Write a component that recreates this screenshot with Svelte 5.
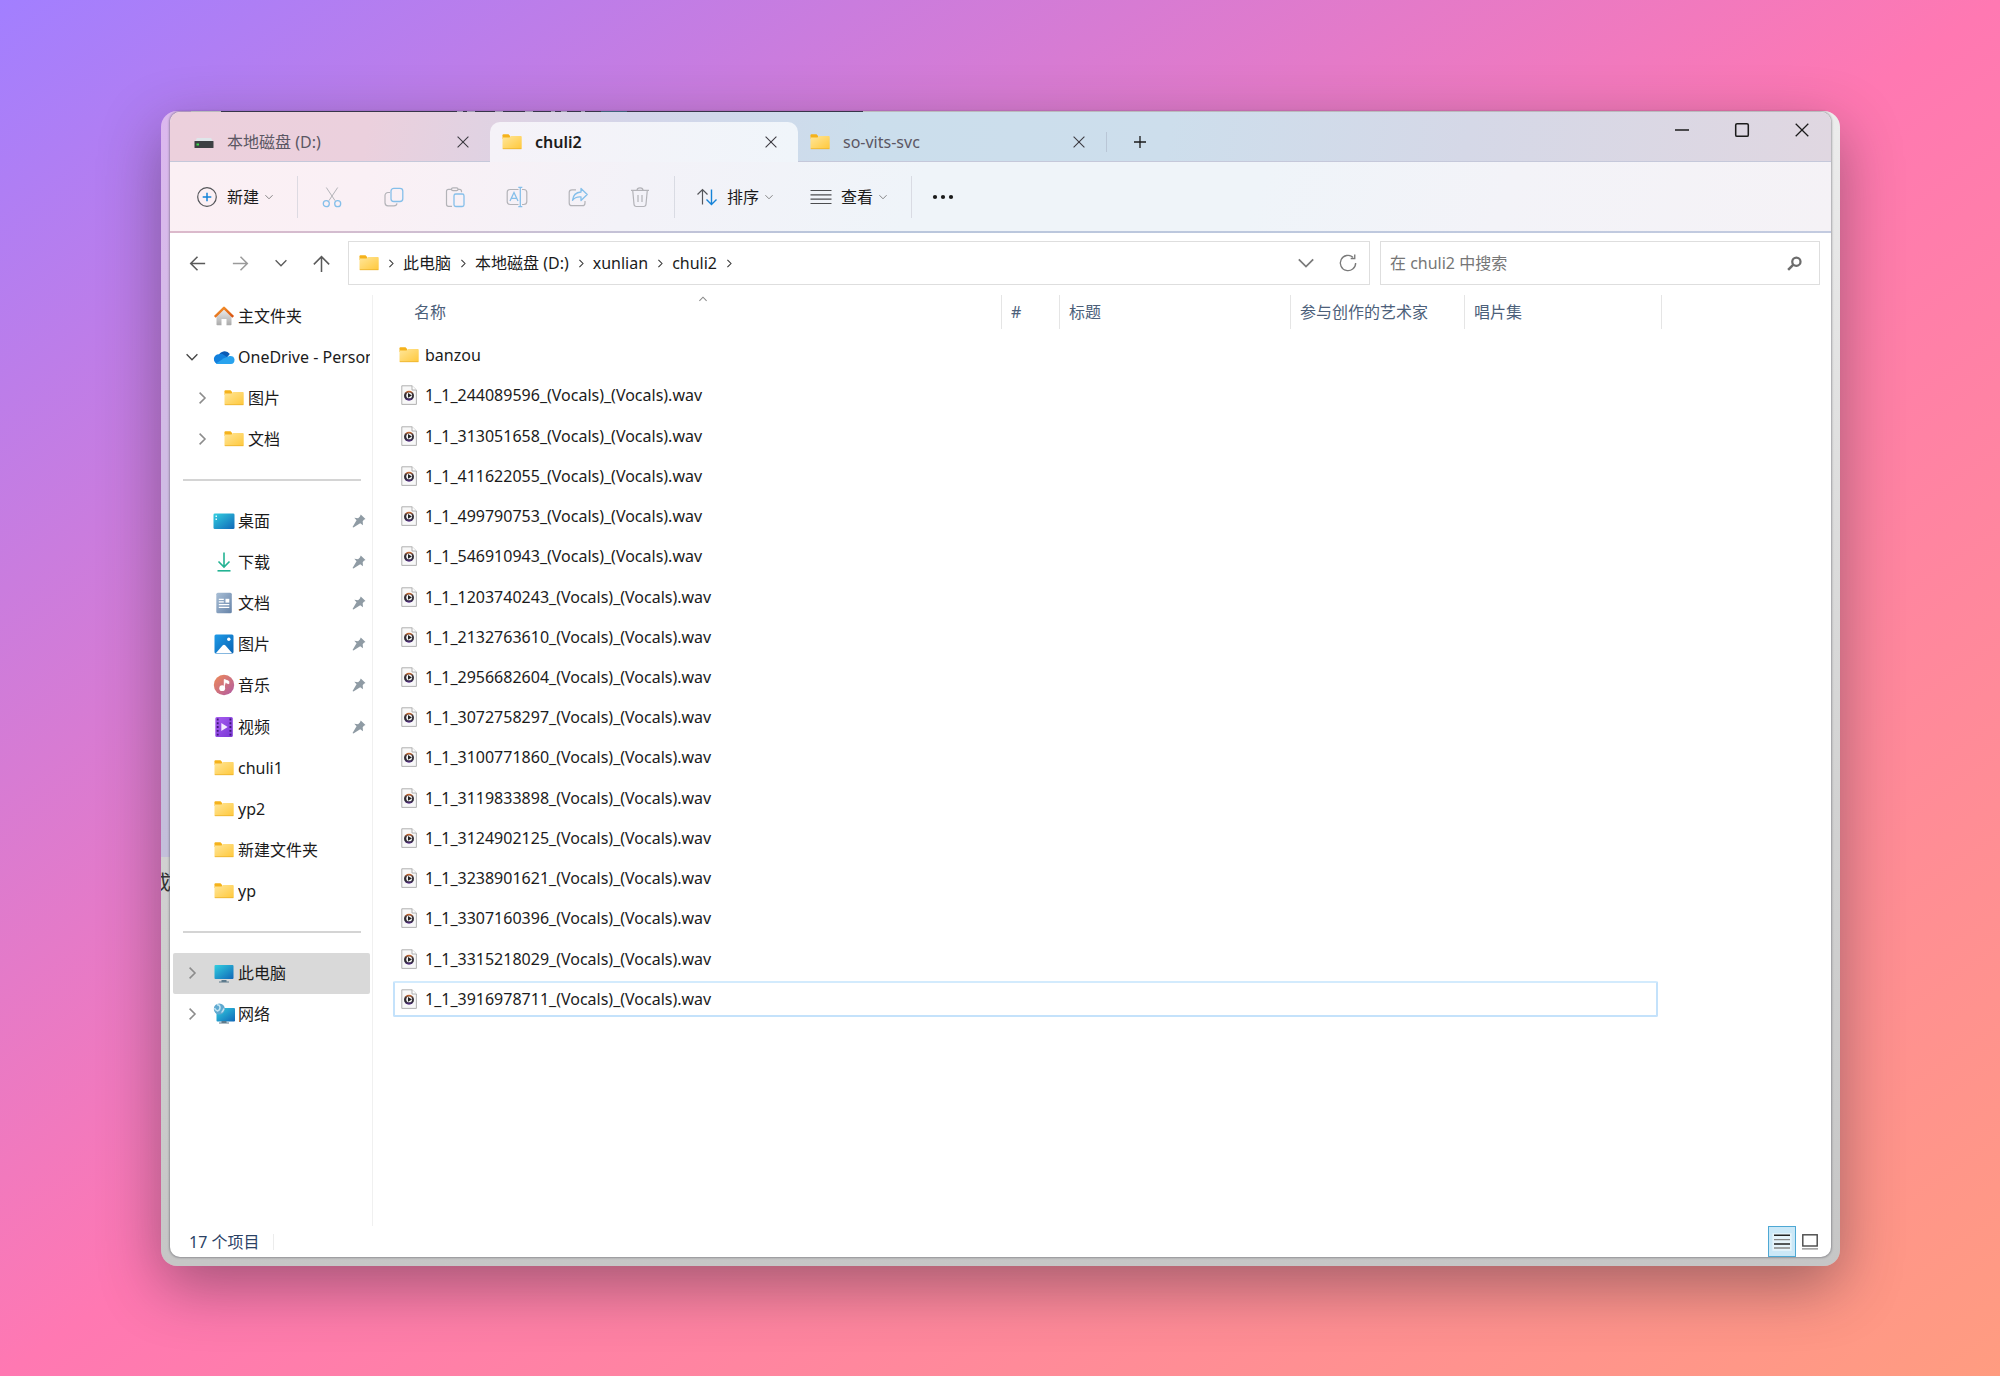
<script>
  const tabs = [
    { label: '本地磁盘 (D:)', icon: 'drive' },
    { label: 'chuli2', icon: 'folder', active: true },
    { label: 'so-vits-svc', icon: 'folder' },
  ];
  const tools = [
    ['剪切', 'cut'],
    ['复制', 'copy'],
    ['粘贴', 'paste'],
    ['重命名', 'rename'],
    ['共享', 'share'],
    ['删除', 'trash'],
  ];
  const crumbs = ['此电脑', '本地磁盘 (D:)', 'xunlian', 'chuli2'];
  const nav = [
    { label: '主文件夹', icon: 'home' },
    { label: 'OneDrive - Personal', icon: 'cloud', arrow: 'down' },
    { label: '图片', icon: 'folder', arrow: 'right', child: true },
    { label: '文档', icon: 'folder', arrow: 'right', child: true },
    { divider: true },
    { label: '桌面', icon: 'desktop', pin: true },
    { label: '下载', icon: 'download', pin: true },
    { label: '文档', icon: 'doc', pin: true },
    { label: '图片', icon: 'picture', pin: true },
    { label: '音乐', icon: 'music', pin: true },
    { label: '视频', icon: 'video', pin: true },
    { label: 'chuli1', icon: 'folder' },
    { label: 'yp2', icon: 'folder' },
    { label: '新建文件夹', icon: 'folder' },
    { label: 'yp', icon: 'folder' },
    { divider: true },
    { label: '此电脑', icon: 'pc', arrow: 'right', selected: true },
    { label: '网络', icon: 'network', arrow: 'right' },
  ];
  const ids = [
    244089596, 313051658, 411622055, 499790753, 546910943, 1203740243, 2132763610, 2956682604,
    3072758297, 3100771860, 3119833898, 3124902125, 3238901621, 3307160396, 3315218029, 3916978711,
  ];
  const files = [
    { name: 'banzou', icon: 'folder' },
    ...ids.map((id) => ({ name: `1_1_${id}_(Vocals)_(Vocals).wav`, icon: 'audio' })),
  ];
</script>

{#snippet icon(name)}
  <svg class="icon {name}" viewBox="0 0 20 20" aria-hidden="true">
    {#if name === 'folder'}
      <path d="M0.5 3.2q0-.9.9-.9h5.1l1.6 1.6v3H.5z" fill="#f5b21b" />
      <path d="M.5 5.6h7l1.4-1.5h10q.8 0 .8.8v11.4q0 .8-.8.8H1.300q-.8 0-.8-.8z" fill="url(#g-folder)" />
      <path d="M.8 16.700h18.600" stroke="#eab12c" stroke-width=".8" />
    {:else if name === 'drive'}
      <path d="M3 6h14l2.500 4H.5z" fill="#dfe6ea" />
      <rect x=".5" y="9" width="19" height="7" rx=".6" fill="#3c4043" />
      <rect x="2.500" y="11.500" width="2.500" height="2" fill="#3ddc4e" />
    {:else if name === 'home'}
      <path d="M2.500 9.500L10 3l7.500 6.500v9q0 .8-.8.8h-4.200v-6.300h-5v6.300H3.300q-.8 0-.8-.8z" fill="url(#g-wall)" />
      <path d="M.8 10.800L10 1.800l9.200 9" fill="none" stroke="url(#g-roof)" stroke-width="2.400" stroke-linejoin="round" />
    {:else if name === 'cloud'}
      <path d="M4.300 9.500a6.400 6.400 0 0 1 11.500-2.500L11 13z" fill="#0a5bb5" />
      <path d="M5 7.200q2.500-1 5 .8l5 3.500L6 17H4.500A4.900 4.900 0 0 1 5 7.200z" fill="#1280dd" />
      <path d="M2 16.500l8-5.200 5.500-2.300q4.400-.4 5 3.400.3 4.200-3.700 4.600H4q-1.200 0-2-.5z" fill="#29a3ee" />
    {:else if name === 'desktop'}
      <rect x="-.5" y="2.500" width="21" height="15.500" rx="1.300" fill="url(#g-screen)" />
      <path d="M1.500 5.300h1.500M1.500 8.300h1.500" stroke="#e4fbff" stroke-width="1.500" />
    {:else if name === 'download'}
      <path d="M10 .5v14M4.500 9.500l5.500 5.500L15.500 9.500" fill="none" stroke="#23b393" stroke-width="1.600" />
      <path d="M3.500 18.800h13" stroke="#23b393" stroke-width="1.600" />
    {:else if name === 'doc'}
      <rect x="2.300" y="-.3" width="15.500" height="20.500" rx="1.500" fill="url(#g-doc)" />
      <path d="M4.800 6.300h5M4.800 8.800h5M4.800 11.600h10.500M4.800 14.300h10.500" stroke="#fff" stroke-width="1.300" />
      <rect x="11.500" y="5.800" width="3.800" height="3.800" fill="#fff" />
    {:else if name === 'picture'}
      <rect x=".5" y=".5" width="19" height="19" rx="1.500" fill="url(#g-pic)" />
      <path d="M2 19L8.800 11.300q1.200-1.300 2.400 0L18 19z" fill="#fff" />
      <circle cx="14.800" cy="5.300" r="1.700" fill="#fff" />
    {:else if name === 'music'}
      <circle cx="10" cy="10" r="10.200" fill="url(#g-music)" />
      <path d="M10.300 12.500V4.500l4.500 1.800v2.400l-3-1.200" fill="#fff" stroke="#fff" stroke-width="1" />
      <circle cx="8.200" cy="13.200" r="2.900" fill="#fff" />
    {:else if name === 'video'}
      <rect x="1.300" y="0" width="17.500" height="20" rx="1.500" fill="url(#g-video)" />
      <path d="M3.700 1.500v17.500M16.400 1.500v17.500" stroke="#3f1878" stroke-width="1.800" stroke-dasharray="1.900 1.900" />
      <path d="M7.300 6v8l6.400-4z" fill="#f4e9ff" />
    {:else if name === 'pc' || name === 'network'}
      <rect x={name === 'pc' ? 0.5 : 2.5} y={name === 'pc' ? 2 : 4} width={name === 'pc' ? 19 : 18.5} height={name === 'pc' ? 14 : 13.5} rx=".9" fill="url(#g-screen)" />
      <path d="M7.500 17h5v1.500h2.500v1H5v-1h2.500z" fill="#5d7a8c" />
      {#if name === 'network'}
        <circle cx="5.300" cy="5" r="5.500" fill="#5fa9d0" />
        <path d="M3 .8q3 0 3 2.700T3.500 7Q1 6 .6 4M7.500 8.500q1.500-1 2.500-4" fill="none" stroke="#c3e4f2" stroke-width="1.500" />
      {/if}
    {:else if name === 'audio'}
      <path d="M2.800.8h10.200L17.400 5v14.400H2.800z" fill="#f8f8f8" stroke="#a9a9a9" stroke-width=".9" />
      <path d="M13 .8V5h4.400" fill="#fff" stroke="#a9a9a9" stroke-width=".9" />
      <circle cx="10" cy="10.700" r="5" fill="url(#g-disc)" />
      <circle cx="10.200" cy="10.400" r="2.900" fill="#f5f5f5" />
      <path d="M9 8v4.800l3.900-2.400z" fill="#222" />
    {:else if name === 'cut'}
      <g fill="none" stroke="#b3b3b8" stroke-width="1">
        <path d="M4.300.5l8.800 13.200M15.700.5L6.900 13.700" />
        <g stroke="#85bfea" stroke-width="1.300"><circle cx="4.300" cy="16.700" r="3" /><circle cx="15.700" cy="16.700" r="3" /></g>
      </g>
    {:else if name === 'copy'}
      <path d="M6 5.500H4a3 3 0 0 0-3 3v7.300a3 3 0 0 0 3 3h6q2.600 0 3-2.500" fill="none" stroke="#b3b3b8" stroke-width="1.200" />
      <rect x="7" y="1.300" width="11.800" height="13.200" rx="2.800" fill="none" stroke="#85bfea" stroke-width="1.300" />
    {:else if name === 'paste'}
      <path d="M7 2.300H3.500Q1.500 2.300 1.500 4.300v13q0 2 2 2H7M13 2.300h1.500q2 0 2 2v1" fill="none" stroke="#b3b3b8" stroke-width="1.200" />
      <rect x="6.500" y=".8" width="6.500" height="2.800" rx="1.400" fill="none" stroke="#b3b3b8" stroke-width="1.200" />
      <rect x="9" y="7" width="10" height="12.500" rx="1.800" fill="none" stroke="#85bfea" stroke-width="1.300" />
    {:else if name === 'rename'}
      <path d="M11.500 2.500H3.200Q.2 2.500.2 5.400v9.200q0 2.900 3 2.900h8.300M15 2.500h1.800q3 0 3 2.900v9.200q0 2.900-3 2.900H15" fill="none" stroke="#b3b3b8" stroke-width="1.200" />
      <path d="M3 14L7 5.500 11 14M4.500 11.300h5M11.300.4h4M11.300 19.600h4M13.300.4v19.200" fill="none" stroke="#85bfea" stroke-width="1.300" />
    {:else if name === 'share'}
      <path d="M8 2.800H4q-2.800 0-2.800 2.800v10.300q0 2.800 2.800 2.800h10.300q2.700 0 2.700-2.800V14" fill="none" stroke="#b3b3b8" stroke-width="1.200" />
      <path d="M13 1.500l6.200 6-6.200 6V10q-5.500-.5-8.500 3.300Q5.300 5.600 13 5z" fill="none" stroke="#85bfea" stroke-width="1.300" stroke-linejoin="round" />
    {:else if name === 'trash'}
      <path d="M1 3.300h18M7 3.300q0-2.500 3-2.500t3 2.500M2.700 3.300l1.300 14q.2 2.200 2.300 2.200h7.400q2.100 0 2.300-2.200l1.300-14M8 8v7M12 8v7" fill="none" stroke="#b3b3b8" stroke-width="1.200" />
    {:else if name === 'plus-circle'}
      <circle cx="10" cy="10" r="9.300" fill="none" stroke="#55565a" stroke-width="1.200" />
      <path d="M10 5.700v8.600M5.700 10h8.600" stroke="#1583d8" stroke-width="1.500" />
    {:else if name === 'sort'}
      <path d="M5.500 17.500V2.500M.5 7.500l5-5 5 5" fill="none" stroke="#55565a" stroke-width="1.200" />
      <path d="M14.500 2.500v15M9.500 12.500l5 5 5-5" fill="none" stroke="#1583d8" stroke-width="1.400" />
    {:else if name === 'lines'}
      <path d="M-.5 3.500h21M-.5 7.800h21M-.5 12.200h21M-.5 16.500h21" stroke="#4c4d50" stroke-width="1.200" />
    {:else if name === 'more'}
      <g fill="#1a1a1a"><circle cx="2" cy="10" r="2.100" /><circle cx="10" cy="10" r="2.100" /><circle cx="18" cy="10" r="2.100" /></g>
    {:else if name === 'chevron-down'}
      <path d="M1 5.500l9 9 9-9" fill="none" stroke="currentColor" stroke-width="2.200" />
    {:else if name === 'chevron-right'}
      <path d="M6 1l9 9-9 9" fill="none" stroke="currentColor" stroke-width="2.600" />
    {:else if name === 'chevron-up'}
      <path d="M1 14.500l9-9 9 9" fill="none" stroke="currentColor" stroke-width="2.600" />
    {:else if name === 'close'}
      <path d="M1 1l18 18M19 1L1 19" fill="none" stroke="currentColor" stroke-width="1.800" />
    {:else if name === 'plus'}
      <path d="M10 0v20M0 10h20" fill="none" stroke="currentColor" stroke-width="2.200" />
    {:else if name === 'minimize'}
      <path d="M0 10h20" stroke="currentColor" stroke-width="2" />
    {:else if name === 'maximize'}
      <rect x="1" y="1" width="18" height="18" rx="2" fill="none" stroke="currentColor" stroke-width="2.200" />
    {:else if name === 'back'}
      <path d="M19 10H2M10 2l-8 8 8 8" fill="none" stroke="currentColor" stroke-width="1.800" />
    {:else if name === 'forward'}
      <path d="M1 10h17M10 2l8 8-8 8" fill="none" stroke="currentColor" stroke-width="1.800" />
    {:else if name === 'up'}
      <path d="M10 20V2M1 11l9-9 9 9" fill="none" stroke="currentColor" stroke-width="1.800" />
    {:else if name === 'refresh'}
      <path d="M18.500 10A8.500 8.500 0 1 1 15.500 3.500M13 5h4.500V.5" fill="none" stroke="currentColor" stroke-width="1.500" />
    {:else if name === 'search'}
      <circle cx="12.500" cy="7.500" r="5.500" fill="none" stroke="currentColor" stroke-width="3" />
      <path d="M8.500 11.500L1.500 18.500" stroke="currentColor" stroke-width="3.400" />
    {:else if name === 'pin'}
      <path d="M12.500.8l6.800 6.500-2.300.8-1.700 2.400.4 5.500-4-2.800L2 19.300.8 18.400 6.500 9 3.300 5.500l5.400.6 2.600-2.400z" fill="#8f9ba4" />
    {:else if name === 'details'}
      <rect x="-2" y="-1" width="24" height="22" fill="#e6f4fb" />
      <path d="M0 1.500h20M0 12.500h20" stroke="#222" stroke-width="1.800" />
      <path d="M0 7h20M0 17.500h20" stroke="#888" stroke-width="1.800" />
    {:else if name === 'large'}
      <rect x="1" y="1" width="18" height="14" fill="#fff" stroke="#4b4b4b" stroke-width="1.800" />
      <path d="M0 18.500h20" stroke="#888" stroke-width="1.600" />
    {/if}
  </svg>
{/snippet}

<svg class="defs" aria-hidden="true">
  <defs>
    <linearGradient id="g-folder" x1="0" y1="0" x2="1" y2="1"><stop stop-color="#ffe69a" /><stop offset="1" stop-color="#ffc83a" /></linearGradient>
    <linearGradient id="g-wall" x1="0" y1="0" x2="0" y2="1"><stop stop-color="#eeeeee" /><stop offset="1" stop-color="#a9a9a9" /></linearGradient>
    <linearGradient id="g-roof" x1="0" y1="0" x2="1" y2="1"><stop stop-color="#f79a2d" /><stop offset="1" stop-color="#d8500f" /></linearGradient>
    <linearGradient id="g-screen" x1="0" y1="0" x2="1" y2="1"><stop stop-color="#32cfe0" /><stop offset="1" stop-color="#1067b8" /></linearGradient>
    <linearGradient id="g-doc" x1="0" y1="0" x2="1" y2="1"><stop stop-color="#a9bfd6" /><stop offset="1" stop-color="#6683a8" /></linearGradient>
    <linearGradient id="g-pic" x1="0" y1="0" x2="1" y2="1"><stop stop-color="#1f9be8" /><stop offset="1" stop-color="#0863b3" /></linearGradient>
    <linearGradient id="g-music" x1="0" y1="0" x2="1" y2="1"><stop stop-color="#ef8a55" /><stop offset="1" stop-color="#b05aa5" /></linearGradient>
    <linearGradient id="g-video" x1="0" y1="0" x2="1" y2="1"><stop stop-color="#a75df0" /><stop offset="1" stop-color="#7a37d6" /></linearGradient>
    <linearGradient id="g-disc" x1="0" y1="0" x2="0" y2="1"><stop stop-color="#e8742c" /><stop offset=".3" stop-color="#3a3036" /><stop offset=".7" stop-color="#2c2a33" /><stop offset="1" stop-color="#5b3090" /></linearGradient>
  </defs>
</svg>

<div class="stage">
  <div class="backdrop">
    <span class="strip" aria-hidden="true"></span>
    <span class="behind" aria-hidden="true"><span>成</span></span>
    <main class="window">
      <header class="titlebar">
        {#each tabs as tab}
          <div class="tab" class:active={tab.active}>
            <button class="tab-label">{@render icon(tab.icon)}<span>{tab.label}</span></button>
            <button class="tab-close" aria-label="关闭标签页">{@render icon('close')}</button>
          </div>
        {/each}
        <button class="new-tab" aria-label="新建标签页">{@render icon('plus')}</button>
        <div class="window-controls">
          <button aria-label="最小化">{@render icon('minimize')}</button>
          <button aria-label="最大化">{@render icon('maximize')}</button>
          <button aria-label="关闭">{@render icon('close')}</button>
        </div>
      </header>

      <div class="toolbar">
        <button class="command new">{@render icon('plus-circle')}<span>新建</span>{@render icon('chevron-down')}</button>
        <div class="tools">
          {#each tools as [label, name]}
            <button aria-label={label}>{@render icon(name)}</button>
          {/each}
        </div>
        <div class="views">
          <button class="command">{@render icon('sort')}<span>排序</span>{@render icon('chevron-down')}</button>
          <button class="command">{@render icon('lines')}<span>查看</span>{@render icon('chevron-down')}</button>
        </div>
        <button class="more-button" aria-label="更多">{@render icon('more')}</button>
      </div>

      <div class="address-row">
        <div class="history">
          <button aria-label="后退">{@render icon('back')}</button>
          <button aria-label="前进" class="dim">{@render icon('forward')}</button>
          <button aria-label="最近的位置" class="recent">{@render icon('chevron-down')}</button>
          <button aria-label="上移">{@render icon('up')}</button>
        </div>
        <nav class="address" aria-label="地址">
          {@render icon('folder')}
          {@render icon('chevron-right')}
          {#each crumbs as crumb}
            <a href="#top">{crumb}</a>
            {@render icon('chevron-right')}
          {/each}
          <button class="expand" aria-label="以前的位置">{@render icon('chevron-down')}</button>
          <button class="reload" aria-label="刷新">{@render icon('refresh')}</button>
        </nav>
        <label class="search-box">
          <input type="text" aria-label="搜索" placeholder="在 chuli2 中搜索" />
          {@render icon('search')}
        </label>
      </div>

      <div class="content">
        <nav class="sidebar" aria-label="导航窗格">
          {#each nav as item}
            {#if item.divider}
              <hr />
            {:else}
              <a href="#top" class="place" class:child={item.child} class:selected={item.selected}>
                <span class="arrow {item.arrow}">
                  {#if item.arrow}{@render icon(`chevron-${item.arrow}`)}{/if}
                </span>
                {@render icon(item.icon)}
                <span class="place-name">{item.label}</span>
                {#if item.pin}{@render icon('pin')}{/if}
              </a>
            {/if}
          {/each}
        </nav>

        <section class="listing">
          <table>
            <colgroup>
              <col class="c-name" /><col class="c-num" /><col class="c-title" /><col class="c-artist" /><col class="c-album" />
            </colgroup>
            <thead>
              <tr>
                <th><span class="sort-mark">{@render icon('chevron-up')}</span><span class="heading">名称</span></th>
                <th><span class="heading">#</span></th>
                <th><span class="heading">标题</span></th>
                <th><span class="heading">参与创作的艺术家</span></th>
                <th><span class="heading">唱片集</span></th>
              </tr>
            </thead>
            <tbody>
              {#each files as file, i}
                <tr>
                  <td colspan="5">
                    <div class="file" class:focused={i === files.length - 1}>
                      {@render icon(file.icon)}<span>{file.name}</span>
                    </div>
                  </td>
                </tr>
              {/each}
            </tbody>
          </table>
        </section>
      </div>

      <footer class="status">
        <span class="count">17 个项目</span>
        <div class="modes">
          <button class="on" aria-label="详细信息">{@render icon('details')}</button>
          <button aria-label="大缩略图">{@render icon('large')}</button>
        </div>
      </footer>
    </main>
  </div>
</div>

<style>
  :global(body) {
    margin: 0;
  }
  * {
    box-sizing: border-box;
  }
  button {
    display: flex;
    align-items: center;
    justify-content: center;
    margin: 0;
    padding: 0;
    border: 0;
    background: none;
    color: inherit;
    font: inherit;
  }
  a {
    color: inherit;
    text-decoration: none;
  }
  .defs {
    position: absolute;
    width: 0;
    height: 0;
  }
  .icon {
    display: block;
    flex: none;
    width: 20px;
    height: 20px;
    overflow: visible;
  }
  .stage {
    display: flex;
    min-height: 100vh;
    padding: 111px 160px 110px 161px;
    background: linear-gradient(to bottom right, #a27fff 0%, #ff78b2 50%, #ff9c80 100%);
    color: #1b1b1b;
    font-family: 'Noto Sans', 'Noto Sans CJK SC', sans-serif;
    font-size: 16px;
    line-height: 22px;
  }
  .backdrop {
    position: relative;
    display: flex;
    flex: 1;
    min-width: 0;
    padding: 1px 9px 9px;
    border-radius: 16px;
    background:
      linear-gradient(#dcb8ee, #c3bfda 100%) 0 0 / 30px 746px no-repeat,
      linear-gradient(#ececec, #d2d2d2 60%, #c6c6c6);
    box-shadow: 0 20px 60px rgba(50, 40, 50, 0.45);
  }
  .strip {
    position: absolute;
    top: 0;
    left: 60px;
    width: 642px;
    height: 2px;
    background: linear-gradient(
      90deg,
      #33304a 236px, #c9bfe0 236px 242px, #33304a 242px 246px, #c9bfe0 246px 254px,
      #33304a 254px 274px, #c9bfe0 274px 282px, #33304a 282px 304px, #c9bfe0 304px 312px,
      #33304a 312px 330px, #c9bfe0 330px 334px, #33304a 334px 340px, #c9bfe0 340px 346px,
      #33304a 346px 360px, #c9bfe0 360px 364px, #33304a 364px 380px, #40708f 380px 406px, #33304a 406px
    );
  }
  .behind {
    position: absolute;
    top: 760px;
    left: 0;
    display: flex;
    justify-content: flex-end;
    width: 10px;
    overflow: hidden;
    color: #333;
    font-size: 20px;
    line-height: 24px;
  }
  .window {
    position: relative;
    display: flex;
    flex: 1;
    flex-direction: column;
    min-width: 0;
    border-radius: 10px;
    background: #fff;
    box-shadow: 0 0 2px 1px rgba(70, 70, 80, 0.4);
    overflow: hidden;
  }
  .titlebar {
    display: flex;
    align-items: stretch;
    height: 50px;
    padding-top: 10px;
    border-bottom: 1px solid #c5c8da;
    background: linear-gradient(100deg, #ecd0dc 0%, #ebd0dd 12%, #d3d5e9 28%, #cbdeec 42%, #cddeec 60%, #d5d8e7 78%, #e0d7e1 100%);
  }
  .tab {
    display: flex;
    flex: 0 1 308px;
    min-width: 0;
    margin-bottom: -1px;
    padding: 0 16px 0 12px;
    border-radius: 10px 10px 0 0;
    color: #5b5763;
  }
  .tab:first-child {
    flex-basis: 320px;
    padding-left: 24px;
  }
  .tab.active {
    background: linear-gradient(90deg, #f5f2f8, #f0f5fa);
    color: #1b1b1b;
    font-weight: 600;
  }
  .tab-label {
    flex: 1;
    justify-content: flex-start;
    gap: 13px;
    min-width: 0;
    white-space: nowrap;
  }
  .tab-close {
    width: 22px;
    color: #3d3b42;
  }
  .tab-close .icon,
  .new-tab .icon {
    width: 12px;
    height: 12px;
  }
  .new-tab {
    align-self: center;
    width: 66px;
    height: 20px;
    border-left: 1px solid #b9c6d6;
  }
  .window-controls {
    display: flex;
    align-items: flex-start;
    gap: 46px;
    margin: 1px 22px 0 auto;
  }
  .window-controls .icon {
    width: 14px;
    height: 14px;
  }
  .toolbar {
    display: flex;
    align-items: center;
    height: 71px;
    padding: 0 24px 0 27px;
    border-bottom: 2px solid;
    border-image: linear-gradient(90deg, #dcb9cb, #b9c6dc 40%, #c3cbe0) 1;
    background: linear-gradient(110deg, #fbf0f4 0%, #faf0f5 12%, #f3f2f8 28%, #eff4f9 45%, #eff4f9 65%, #f3f3f8 80%, #f5f2f6 100%);
  }
  .command {
    gap: 10px;
  }
  .command .chevron-down {
    width: 8px;
    height: 8px;
    margin-left: -4px;
    color: #777;
  }
  .new {
    justify-content: flex-start;
    width: 101px;
    height: 42px;
    border-right: 1px solid #dddae2;
  }
  .tools {
    display: flex;
    justify-content: space-between;
    width: 377px;
    height: 42px;
    padding: 0 24px;
    border-right: 1px solid #d9dbe3;
  }
  .views {
    display: flex;
    gap: 38px;
    width: 237px;
    height: 42px;
    padding-left: 22px;
    border-right: 1px solid #d9dbe3;
  }
  .more-button {
    margin-left: 21px;
  }
  .address-row {
    display: flex;
    align-items: center;
    padding: 8px 11px 10px 19px;
  }
  .history {
    display: flex;
    flex: none;
    align-items: center;
    justify-content: space-between;
    width: 141px;
    margin-right: 18px;
    color: #5a5a5a;
  }
  .history .icon {
    width: 17px;
    height: 17px;
  }
  .history .recent .icon {
    width: 12px;
    height: 12px;
  }
  .history .dim {
    color: #9a9a9a;
  }
  .address {
    display: flex;
    flex: 1022 1022 1022px;
    align-items: center;
    gap: 8px;
    min-width: 0;
    height: 44px;
    padding: 0 12px 0 10px;
    border: 1px solid #dedede;
    white-space: nowrap;
  }
  .address .chevron-right {
    width: 8px;
    height: 9px;
    color: #333;
  }
  .address button {
    color: #7a7a7a;
  }
  .expand {
    margin-left: auto;
  }
  .expand .icon {
    width: 16px;
    height: 16px;
  }
  .reload {
    margin-left: 17px;
  }
  .reload .icon {
    width: 18px;
    height: 18px;
  }
  .search-box {
    display: flex;
    flex: 440 440 440px;
    align-items: center;
    min-width: 0;
    height: 44px;
    margin-left: 10px;
    padding: 0 17px 0 9px;
    border: 1px solid #dedede;
    color: #6c6c6c;
  }
  .search-box input {
    flex: 1;
    min-width: 0;
    padding: 0;
    border: 0;
    outline: 0;
    font: inherit;
  }
  .search-box input::placeholder {
    color: #767676;
    opacity: 1;
  }
  .search-box .icon {
    width: 15px;
    height: 15px;
  }
  .content {
    display: flex;
    flex: 1;
    min-height: 0;
  }
  .sidebar {
    display: grid;
    flex: none;
    grid-auto-rows: 1fr;
    align-self: stretch;
    align-content: start;
    width: 203px;
    padding: 0 2px 191px 3px;
    border-right: 1px solid #f0f0f0;
  }
  .sidebar hr {
    align-self: center;
    width: 178px;
    height: 2px;
    margin: 0 0 0 10px;
    border: 0;
    background: #d4d4d4;
  }
  .place {
    display: flex;
    align-items: center;
    gap: 4px;
    min-width: 0;
    height: 41px;
    padding-left: 13px;
    border-radius: 2px;
    white-space: nowrap;
  }
  .place.child {
    padding-left: 23px;
  }
  .place.selected {
    background: #d9d9d9;
  }
  .arrow {
    width: 24px;
    color: #8c8c8c;
  }
  .arrow.down {
    color: #444;
  }
  .arrow .icon {
    width: 12px;
    height: 12px;
  }
  .place-name {
    flex: 1;
    min-width: 0;
    overflow: hidden;
  }
  .place .pin {
    width: 14px;
    height: 14px;
    margin-right: 4px;
  }
  .listing {
    flex: 1;
    min-width: 0;
    padding: 0 169px 0 20px;
  }
  table {
    width: 100%;
    height: 724px;
    border-collapse: collapse;
    table-layout: fixed;
  }
  .c-name {
    width: 48%;
  }
  .c-num {
    width: 58px;
  }
  .c-title {
    width: 231px;
  }
  .c-artist {
    width: 174px;
  }
  .c-album {
    width: 197px;
  }
  th {
    position: relative;
    height: 40px;
    padding: 0;
    color: #4c607a;
    font-weight: 400;
    text-align: left;
    vertical-align: top;
    white-space: nowrap;
  }
  .heading {
    display: flex;
    align-items: center;
    height: 34px;
    padding-left: 9px;
    border-right: 1px solid #e5e5e5;
  }
  th:first-child .heading {
    padding-left: 21px;
  }
  .sort-mark {
    position: absolute;
    top: 0;
    left: 50%;
  }
  .sort-mark .icon {
    width: 10px;
    height: 8px;
    color: #888;
  }
  td {
    padding: 0;
  }
  .file {
    display: flex;
    align-items: center;
    gap: 6px;
    height: 36px;
    margin-right: 4px;
    padding-left: 4px;
    border: 2px solid transparent;
    border-radius: 2px;
    white-space: nowrap;
  }
  .file.focused {
    border-color: #d3ebfd #c4e2fb #c4e2fb;
  }
  .status {
    display: flex;
    align-items: center;
    justify-content: space-between;
    height: 31px;
    padding: 0 7px 0 19px;
    color: #2b4266;
  }
  .count {
    padding-right: 14px;
    border-right: 1px solid #ececec;
    line-height: 16px;
  }
  .modes {
    display: flex;
    align-self: stretch;
  }
  .modes button {
    width: 28px;
    border: 1px solid transparent;
  }
  .modes .on {
    border-color: #4ea8d4;
    background: #cbe8f7;
  }
  .modes .icon {
    width: 16px;
    height: 16px;
  }
</style>
